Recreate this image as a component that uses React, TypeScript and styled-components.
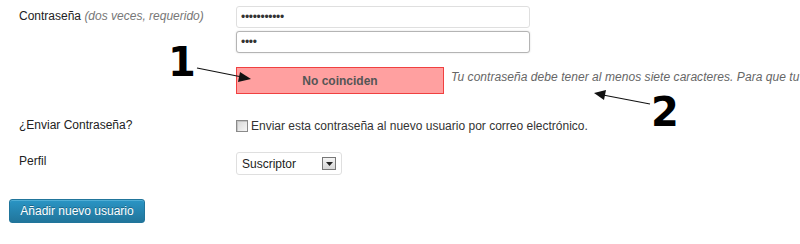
import styled, {createGlobalStyle} from "styled-components";

const GlobalStyle = createGlobalStyle`
  html, body {
    margin: 0;
    padding: 0;
    background: #fff;
    overflow: hidden;
  }

  body {
    font-family: "Liberation Sans", Arial, sans-serif;
    font-size: 12px;
    color: #333;
  }
`;

export default function App() {
  return (
    <>
      <GlobalStyle/>
      <Page>
        <FormRow $height={119}>
          <Label $top={9}>
            Contraseña <Hint>(dos veces, requerido)</Hint>
          </Label>
          <Field>
            <PassInput type="password" value="contrasenia" readOnly/>
            <PassInput type="password" value="abcd" readOnly $focused/>
            <StrengthRow>
              <Indicator>No coinciden</Indicator>
              <Description>
                Tu contraseña debe tener al menos siete caracteres. Para que tu contraseña sea más segura, usa mayúsculas, minúsculas, números y símbolos.
              </Description>
            </StrengthRow>
          </Field>
        </FormRow>

        <FormRow $height={33}>
          <Label $top={-1}>¿Enviar Contraseña?</Label>
          <CheckLine>
            <CheckBox/>
            Enviar esta contraseña al nuevo usuario por correo electrónico.
          </CheckLine>
        </FormRow>

        <FormRow $height={47}>
          <Label $top={2}>Perfil</Label>
          <Select>
            <span>Suscriptor</span>
            <DropButton>
              <svg width="7" height="4" viewBox="0 0 7 4">
                <path d="M0 0h7L3.5 4z" fill="#222"/>
              </svg>
            </DropButton>
          </Select>
        </FormRow>

        <SubmitButton>Añadir nuevo usuario</SubmitButton>

        <Overlay>
          <svg width="800" height="244" viewBox="0 0 800 244">
            <line x1="197" y1="68" x2="242" y2="77" stroke="#111" strokeWidth="1.2"/>
            <path d="M251 79 L240 72 L238 82 Z" fill="#111"/>
            <line x1="650" y1="104" x2="603" y2="95" stroke="#111" strokeWidth="1.2"/>
            <path d="M594 93 L606 90 L604 100 Z" fill="#111"/>
          </svg>
          <Callout $x={168} $y={42}>1</Callout>
          <Callout $x={651} $y={92}>2</Callout>
        </Overlay>
      </Page>
    </>
  );
}

const Page = styled.div`
  position: relative;
  width: 800px;
  height: 244px;
  overflow: hidden;
`;

const FormRow = styled.div<{ $height: number }>`
  display: grid;
  grid-template-columns: 236px 1fr;
  height: ${p => p.$height}px;
`;

const Label = styled.div<{ $top: number }>`
  padding-left: 19px;
  padding-top: ${p => Math.max(p.$top, 0)}px;
  margin-top: ${p => Math.min(p.$top, 0)}px;
  line-height: 14px;
  color: #222;
  white-space: nowrap;
`;

const Hint = styled.span`
  font-style: italic;
  color: #777;
`;

const Field = styled.div`
  display: flex;
  flex-direction: column;
  padding-top: 6px;
  min-width: 0;
`;

const PassInput = styled.input<{ $focused?: boolean }>`
  box-sizing: border-box;
  width: 294px;
  height: 22px;
  margin: 0 0 3px;
  padding: 0 4px;
  border: 1px solid ${p => p.$focused ? "#b4b4b4" : "#dfdfdf"};
  border-radius: 3px;
  background: #fff;
  font-family: "Liberation Sans", Arial, sans-serif;
  font-size: 12px;
  color: #333;
  outline: none;
  box-shadow: ${p => p.$focused ? "0 0 2px rgba(0,0,0,0.15)" : "none"};
  letter-spacing: -0.3px;
`;

const StrengthRow = styled.div`
  display: flex;
  align-items: flex-start;
  margin-top: 11px;
  gap: 7px;
  white-space: nowrap;
`;

const Indicator = styled.div`
  box-sizing: border-box;
  flex: none;
  width: 208px;
  height: 27px;
  background: #ffa0a0;
  border: 1px solid #f04040;
  display: flex;
  align-items: center;
  justify-content: center;
  font-weight: bold;
  color: #555;
  padding-top: 1px;
`;

const Description = styled.div`
  font-style: italic;
  color: #666;
  line-height: 14px;
  padding-top: 3px;
  letter-spacing: 0.05px;
`;

const CheckLine = styled.label`
  display: flex;
  align-items: center;
  gap: 3px;
  height: 13px;
  color: #333;
  white-space: nowrap;
`;

const CheckBox = styled.span`
  box-sizing: border-box;
  width: 12px;
  height: 12px;
  border: 1px solid #8a8a8a;
  background: linear-gradient(135deg, #d8d8d8, #f6f6f6);
  box-shadow: inset 1px 1px 0 #c4c4c4;
`;

const Select = styled.div`
  box-sizing: border-box;
  width: 106px;
  height: 23px;
  border: 1px solid #dfdfdf;
  border-radius: 3px;
  display: flex;
  align-items: center;
  justify-content: space-between;
  padding: 0 5px 0 5px;
  color: #222;
  background: #fff;
`;

const DropButton = styled.span`
  box-sizing: border-box;
  width: 14px;
  height: 13px;
  border: 1px solid #777;
  background: linear-gradient(#f4f4f4, #d6d6d6);
  display: flex;
  align-items: center;
  justify-content: center;
`;

const SubmitButton = styled.button`
  box-sizing: border-box;
  margin-left: 9px;
  width: 136px;
  height: 24px;
  padding: 0;
  border: 1px solid #21759b;
  border-radius: 3px;
  background: linear-gradient(#2a95c5, #21759b);
  box-shadow: inset 0 1px 0 rgba(120, 200, 230, 0.5);
  color: #fff;
  font-family: "Liberation Sans", Arial, sans-serif;
  font-size: 12px;
  text-shadow: 0 -1px 0 rgba(0, 0, 0, 0.3);
`;

const Overlay = styled.div`
  position: absolute;
  inset: 0;
  pointer-events: none;

  svg {
    position: absolute;
    left: 0;
    top: 0;
  }
`;

const Callout = styled.span<{ $x: number; $y: number }>`
  position: absolute;
  left: ${p => p.$x}px;
  top: ${p => p.$y}px;
  font-family: "DejaVu Sans", Verdana, sans-serif;
  font-weight: bold;
  font-size: 40px;
  line-height: 40px;
  color: #000;
`;
